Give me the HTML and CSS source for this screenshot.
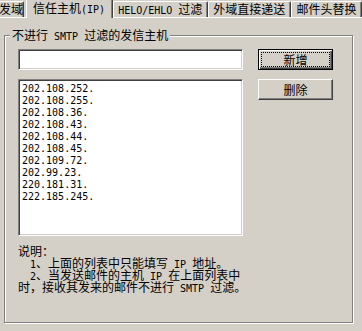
FILE: index.html
```html
<!DOCTYPE html>
<html lang="zh-CN">
<head>
    <meta charset="UTF-8">
    <meta name="viewport" content="width=device-width, initial-scale=1.0">
    <title>信任主机(IP)</title>
    <link rel="stylesheet" href="styles.css">
</head>
<body>
    <div class="window">
        <div class="tabs">
            <div class="tab first">发域</div>
            <div class="tab active">信任主机<span class="en">(IP)</span></div>
            <div class="tab"><span class="en">HELO/EHLO </span>过滤</div>
            <div class="tab">外域直接递送</div>
            <div class="tab">邮件头替换</div>
        </div>

        <div class="page">
            <fieldset class="group">
                <legend>不进行<span class="en"> SMTP </span>过滤的发信主机</legend>
                <div class="inner">
                    <div class="grid">
                        <input type="text" class="edit">
                        <button class="btn default"><span class="focus">新增</span></button>
                        <div class="list">
                            <div>202.108.252.</div>
                            <div>202.108.255.</div>
                            <div>202.108.36.</div>
                            <div>202.108.43.</div>
                            <div>202.108.44.</div>
                            <div>202.108.45.</div>
                            <div>202.109.72.</div>
                            <div>202.99.23.</div>
                            <div>220.181.31.</div>
                            <div>222.185.245.</div>
                        </div>
                        <button class="btn"><span class="label">删除</span></button>
                    </div>
                    <div class="note">
                        <div>说明：</div>
                        <div><span class="en">  1</span>、上面的列表中只能填写<span class="en"> IP </span>地址。</div>
                        <div><span class="en">  2</span>、当发送邮件的主机<span class="en"> IP </span>在上面列表中</div>
                        <div>时，接收其发来的邮件不进行<span class="en"> SMTP </span>过滤。</div>
                    </div>
                </div>
            </fieldset>
        </div>
    </div>
</body>
</html>
```

FILE: styles.css
```css
html, body {
    margin: 0;
    background: #d4d0c8;
}
body {
    font-family: "Noto Sans CJK SC", "DejaVu Sans", sans-serif;
    font-size: 12px;
    color: #000;
}
.en {
    font-family: "DejaVu Sans Mono", monospace;
    font-size: 10px;
    line-height: 8px;
    white-space: pre;
}
.window {
    width: 362px;
    height: 331px;
    overflow: hidden;
}

/* tab strip */
.tabs {
    display: flex;
    align-items: flex-end;
    height: 17px;
    border-bottom: 1px solid #fff;
}
.tab {
    flex: none;
    height: 15px;
    line-height: 14px;
    padding: 0 5px 0 4px;
    border: 1px solid #fff;
    border-bottom: 0;
    border-right-color: #404040;
    border-radius: 2px 2px 0 0;
    box-shadow: inset -1px 0 #808080;
    white-space: nowrap;
}
.tab.first {
    margin-left: -6px;
    padding-right: 0;
}
.tab.active {
    height: 18px;
    line-height: 16px;
    margin: 0 0 -1px 2px;
    padding: 0 7px 0 6px;
    background: #d4d0c8;
}

/* tab page */
.page {
    padding: 10px 0 0 4px;
}
.group {
    width: 349px;
    height: 295px;
    box-sizing: border-box;
    margin: 0;
    padding: 0;
    min-width: 0;
    border: 1px solid #808080;
    box-shadow: inset 1px 1px #fff, 1px 1px #fff;
}
.group legend {
    margin-left: 5px;
    padding: 0 2px;
    line-height: 14px;
    background: #d4d0c8;
}
.inner {
    padding: 7px 19px 0 13px;
}
.grid {
    display: grid;
    grid-template-columns: 225px 75px;
    grid-template-rows: 21px 157px;
    column-gap: 15px;
    row-gap: 9px;
}

/* sunken controls */
.edit, .list {
    box-sizing: border-box;
    border: 1px solid;
    border-color: #808080 #fff #fff #808080;
    box-shadow: inset 1px 1px #404040, inset -1px -1px #d4d0c8;
    background: #fff;
}
.edit {
    width: 225px;
    height: 21px;
    margin: 0;
    padding: 0 3px;
    outline: none;
}
.list {
    padding: 3px 0 0 3px;
    font-family: "DejaVu Sans Mono", monospace;
    font-size: 10px;
    line-height: 12px;
}

/* buttons */
.btn {
    box-sizing: border-box;
    width: 75px;
    height: 21px;
    margin: 0;
    padding: 0;
    font: inherit;
    color: #000;
    background: #d4d0c8;
    border: 1px solid;
    border-color: #fff #404040 #404040 #fff;
    box-shadow: inset -1px -1px #808080;
    align-self: start;
}
.btn .label {
    display: block;
    line-height: 18px;
}
.btn.default {
    border-color: #000;
    box-shadow: inset 1px 1px #fff, inset -1px -1px #404040, inset -2px -2px #808080;
    padding: 2px;
}
.btn .focus {
    display: block;
    line-height: 13px;
    border: 1px dotted #000;
}

.note {
    margin-top: 9px;
    line-height: 12px;
}
```
